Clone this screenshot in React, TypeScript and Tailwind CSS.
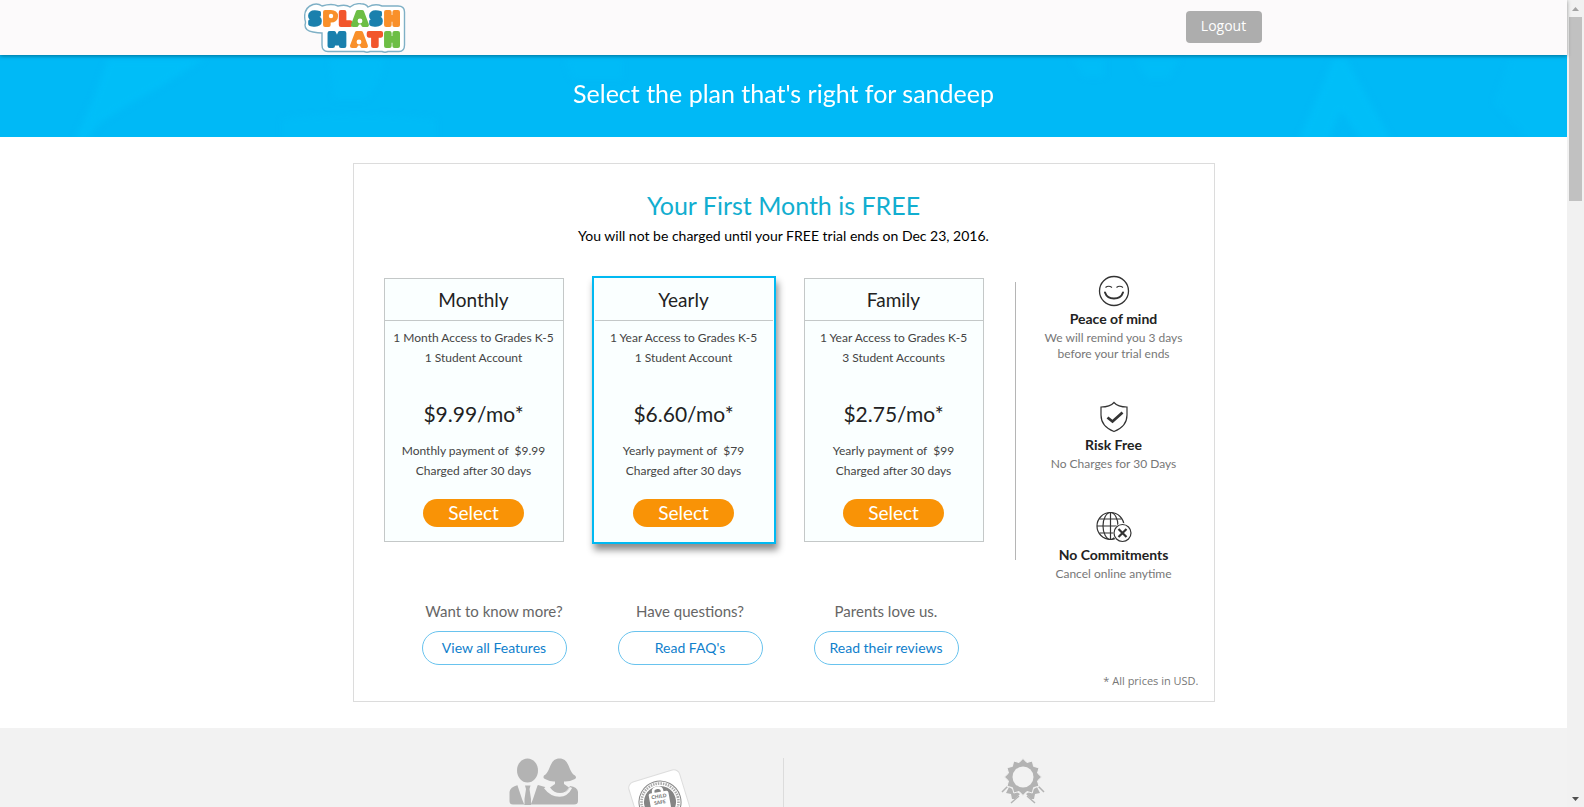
import React from "react";

type Plan = {
  name: string;
  access: string;
  accounts: string;
  price: string;
  payment: string;
  amount: string;
  featured?: boolean;
};

const plans: Plan[] = [
  { name: "Monthly", access: "1 Month Access to Grades K-5", accounts: "1 Student Account", price: "$9.99/mo", payment: "Monthly payment of", amount: "$9.99" },
  { name: "Yearly", access: "1 Year Access to Grades K-5", accounts: "1 Student Account", price: "$6.60/mo", payment: "Yearly payment of", amount: "$79", featured: true },
  { name: "Family", access: "1 Year Access to Grades K-5", accounts: "3 Student Accounts", price: "$2.75/mo", payment: "Yearly payment of", amount: "$99" },
];

const links = [
  { question: "Want to know more?", label: "View all Features" },
  { question: "Have questions?", label: "Read FAQ's" },
  { question: "Parents love us.", label: "Read their reviews" },
];

const BLUE = "#1a80ad";
const ORANGE = "#f9902a";
const RED = "#f2562c";
const GREEN = "#6dbe45";

const letters: [string, number, number, string][] = [
  ["S", 11, 22, BLUE],
  ["P", 26, 22, ORANGE],
  ["L", 41, 22, RED],
  ["A", 56, 22, GREEN],
  ["S", 72, 22, BLUE],
  ["H", 88, 22, ORANGE],
  ["M", 33, 43, BLUE],
  ["A", 55, 43, ORANGE],
  ["T", 71, 43, RED],
  ["H", 88, 43, GREEN],
];

function Logo() {
  return (
    <svg width="102" height="50" viewBox="0 0 102 50" role="img" aria-label="Splash Math">
      <path
        d="M9 1.500 Q14 0 18 3 Q28 0 34 3 Q42 1 46 4 Q51 0 57 0.800 Q62 1 64 4 Q71 0 78 3 H94 Q100.500 3 100.500 9 V42 Q100.500 48.500 95 48.500 H84 Q81 50 78 48.500 H66 Q63 50 60 48.500 H24 Q18 48.500 18 42 V30 Q14 30 9 29 Q1 28 1 22 Q2 19 1 17 Q-1 5 9 1.500 Z"
        fill="#fff"
        stroke="#7fb0c6"
        strokeWidth="1.400"
      />
      <g fontFamily="DejaVu Sans, sans-serif" fontWeight="700" fontSize="18" textAnchor="middle" strokeLinejoin="round">
        {letters.map(([ch, x, y, color], i) => (
          <text key={i} x={x} y={y} fill={color} stroke={color} strokeWidth={ch === "S" ? 3.4 : 4.2}>
            {ch}
          </text>
        ))}
      </g>
      <g fill="#fff">
        <circle cx="27" cy="13" r="2.200" />
        <circle cx="56" cy="18" r="2.400" />
        <circle cx="55" cy="39" r="2.400" />
      </g>
    </svg>
  );
}

function BannerPattern() {
  return (
    <svg className="absolute inset-0 h-full w-full" viewBox="0 0 1567 82" preserveAspectRatio="xMidYMid slice" aria-hidden="true">
      <defs>
        <filter id="soft">
          <feGaussianBlur stdDeviation="3" />
        </filter>
      </defs>
      <g fill="#00bff9" filter="url(#soft)">
        <path d="M108 4 L204 4 L160 32 L125 52 L100 68 L86 86 L74 86 L94 42 Z" opacity="0.800" />
        <path d="M330 4 H384 Q380 30 366 44 H334 Z" opacity="0.400" />
        <path d="M282 64 Q350 54 436 64 V84 H282 Z" opacity="0.400" />
        <path d="M565 4 H622 V24 H572 Z" opacity="0.400" />
        <path d="M1072 4 H1104 V22 H1084 Z M1136 4 H1180 L1168 24 H1146 Z" opacity="0.500" />
        <path d="M1333 4 H1346 L1392 86 H1362 L1341 56 L1328 86 H1298 L1318 40 Z" opacity="0.800" />
        <path d="M1510 4 H1567 V86 H1530 L1494 48 Z" opacity="0.400" />
      </g>
    </svg>
  );
}

function SmileIcon() {
  return (
    <svg width="32" height="32" viewBox="0 0 32 32" fill="none" stroke="#333" aria-hidden="true">
      <circle cx="16" cy="16" r="14.500" strokeWidth="1.300" />
      <path d="M7.500 12.500 Q10.500 10 14 12.500 M18.500 12.500 Q21.500 10 25 12.500" strokeWidth="1.200" />
      <path d="M7 17.500 Q9 23.500 16 23.500 Q23 23.500 25 17.500" strokeWidth="2" strokeLinecap="round" />
    </svg>
  );
}

function ShieldIcon() {
  return (
    <svg width="32" height="32" viewBox="0 0 32 32" fill="none" stroke="#333" aria-hidden="true">
      <path d="M16 1.500 Q12 6 3 6 V14 Q3 25.500 16 30.500 Q29 25.500 29 14 V6 Q20 6 16 1.500 Z" strokeWidth="1.200" />
      <path d="M9.500 16.500 L14.500 20.500 L24.500 11.500" strokeWidth="2.800" />
    </svg>
  );
}

function GlobeIcon() {
  return (
    <svg width="36" height="32" viewBox="0 0 36 32" fill="none" stroke="#333" strokeWidth="1.200" aria-hidden="true">
      <circle cx="14.500" cy="15" r="13.500" />
      <ellipse cx="14.500" cy="15" rx="7.500" ry="13.500" />
      <path d="M14.500 1.500 V28.500 M1 15 H28 M3.500 8 H25.500 M3.500 22 H25.500" />
      <circle cx="27" cy="22" r="10" fill="#fff" stroke="none" />
      <circle cx="26.500" cy="22" r="8.500" fill="#fff" />
      <path d="M22.500 18 L30.500 26 M30.500 18 L22.500 26" strokeWidth="2.200" />
    </svg>
  );
}

const benefits = [
  { icon: <SmileIcon />, title: "Peace of mind", lines: ["We will remind you 3 days", "before your trial ends"], gap: "h-[126px]" },
  { icon: <ShieldIcon />, title: "Risk Free", lines: ["No Charges for 30 Days"], gap: "h-[110px]" },
  { icon: <GlobeIcon />, title: "No Commitments", lines: ["Cancel online anytime"], gap: "" },
];

function PlanCard({ plan }: { plan: Plan }) {
  return (
    <article
      className={
        "flex flex-col items-center bg-[#faffff] text-center text-[#444] " +
        (plan.featured
          ? "w-[184px] border-2 border-[#00b9f2] px-px py-px shadow-[2px_6px_7px_rgba(0,0,0,0.45)]"
          : "my-[2px] w-[180px] border border-[#c4c8c8]")
      }
    >
      <h2 className="h-[42px] w-full border-b border-[#c4c8c8] text-[19px] leading-[42px] text-[#222]">{plan.name}</h2>
      <p className="mt-[7px] text-xs leading-5">
        {plan.access}
        <br />
        {plan.accounts}
      </p>
      <p className="mt-[31px] text-[21px] leading-[30px] text-[#222]">{plan.price}*</p>
      <p className="mt-3 text-xs leading-5">
        {plan.payment}&nbsp; {plan.amount}
        <br />
        Charged after 30 days
      </p>
      <button type="button" className="mt-[18px] mb-[14px] h-7 w-[101px] rounded-full bg-[#f99306] text-[19px] leading-7 text-white">
        Select
      </button>
    </article>
  );
}

function ParentsIcon() {
  return (
    <svg width="70" height="48" viewBox="0 0 70 48" fill="#b3b3b3" aria-hidden="true">
      <ellipse cx="18.500" cy="12.500" rx="10.500" ry="12" />
      <path d="M9 27 Q1 29 0.500 34 V43 Q0.500 46.500 4 46.500 H65 Q69 46.500 69 43 V34 Q68.500 29 61 28 Q57 37 50 37.500 Q41 37 36 29 L29 27 Q25 30 18.500 30 Q12 30 9 27 Z" />
      <path d="M50.500 0.500 C40 0.500 42 14 35 17.500 Q33.500 20 36 21 Q42 24 46 23.500 V26 L41 29.500 Q45 35 51 35 Q57 35 60 29.500 L55 26 V23.500 Q60 24 66 21 Q68 19.500 66 17.500 C59 14 61 0.500 50.500 0.500 Z" />
      <path d="M8 26 H29 L24 41 L22 46 H15 L13 41 Z" fill="#f2f2f2" />
      <path d="M16 27.500 H21.500 L20.500 31 L22 41 V47 H15.500 V41 L17 31 Z" />
      <path d="M36 29.500 Q42 37.500 50.500 37.500 Q58 37.500 62 29.500" fill="none" stroke="#f2f2f2" strokeWidth="2.500" />
    </svg>
  );
}

function SealIcon() {
  return (
    <svg width="72" height="72" viewBox="0 0 72 72" role="img" aria-label="Child Safe">
      <g transform="rotate(-17 36 36)">
        <rect x="10" y="9" width="53" height="54" rx="6" fill="#fff" stroke="#ddd" />
        <circle cx="36" cy="36" r="21" fill="#fff" stroke="#888" strokeWidth="1" />
        <circle cx="36" cy="36" r="18.500" fill="none" stroke="#aaa" strokeWidth="2.600" strokeDasharray="1.500 1" />
        <circle cx="36" cy="36" r="16" fill="#858585" />
      </g>
      <g transform="rotate(-10 36 36)">
        <path d="M31 27 V25 Q31 21.500 35.500 21.500 Q40 21.500 40 25 V27" fill="none" stroke="#fff" strokeWidth="2.600" />
        <rect x="26" y="26" width="20" height="18" rx="2" fill="#fff" />
        <g fill="#777" fontFamily="Lato, sans-serif" fontWeight="900" fontSize="5" textAnchor="middle">
          <text x="36" y="32">CHILD</text>
          <text x="36" y="38">SAFE</text>
        </g>
      </g>
    </svg>
  );
}

function RibbonIcon() {
  const points = Array.from({ length: 24 }, (_, i) => {
    const r = i % 2 ? 15 : 18.5;
    const a = (i * Math.PI) / 12 - Math.PI / 2;
    return `${(22 + r * Math.cos(a)).toFixed(1)},${(19 + r * Math.sin(a)).toFixed(1)}`;
  }).join(" ");
  return (
    <svg width="44" height="48" viewBox="0 0 44 48" fill="#b3b3b3" aria-hidden="true">
      <path d="M8 29 L19 36 L14 41 L11 41 L10 36 L5 35 Z M36 29 L25 36 L30 41 L33 41 L34 36 L39 35 Z" />
      <path d="M7 28 L1 34 M18 38 L10 45 M37 28 L43 34 M26 38 L34 45" stroke="#b3b3b3" strokeWidth="1.500" />
      <polygon points={points} stroke="#f2f2f2" strokeWidth="1" />
      <circle cx="22" cy="19" r="10.500" fill="#f2f2f2" />
    </svg>
  );
}

export default function App() {
  return (
    <div className="flex h-screen overflow-hidden bg-white font-['Lato',sans-serif] text-black">
      <div className="flex min-w-0 flex-1 flex-col">
        <header className="relative z-10 shrink-0 bg-[#fcfafb] shadow-[0_1px_4px_rgba(0,0,0,0.4)]">
          <div className="mx-auto flex h-[55px] max-w-[960px] items-start justify-between pr-[2px]">
            <a href="#home" className="mt-[3px]">
              <Logo />
            </a>
            <button type="button" className="mt-[11px] h-8 w-[76px] rounded bg-[#adadad] pb-[3px] font-['Open_Sans',sans-serif] text-sm text-white">
              Logout
            </button>
          </div>
        </header>

        <div className="relative h-[82px] shrink-0 bg-[#00b9f6]">
          <BannerPattern />
          <h1 className="relative pt-[22px] text-center text-[25px] leading-8 text-white">Select the plan that's right for sandeep</h1>
        </div>

        <main className="mx-auto mt-[26px] w-full max-w-[862px] shrink-0 border border-[#dcdcdc] px-[30px] pb-3">
          <h2 className="mt-[25px] text-center text-[25px] leading-8 text-[#12aed0]">Your First Month is FREE</h2>
          <p className="mt-[5px] text-center text-sm leading-5">You will not be charged until your FREE trial ends on Dec 23, 2016.</p>

          <div className="mt-[30px] flex items-start">
            <div className="flex gap-7">
              {plans.map((p) => (
                <PlanCard key={p.name} plan={p} />
              ))}
            </div>
            <div className="-mr-7 mt-[6px] ml-[31px] flex h-[278px] flex-1 flex-col border-l border-[#b5b5b5]">
              {benefits.map((b) => (
                <section key={b.title} className={"-mt-[7px] mb-[7px] flex shrink-0 flex-col items-center text-center " + b.gap}>
                  {b.icon}
                  <h3 className="mt-[2px] text-sm leading-5 font-bold text-[#222]">{b.title}</h3>
                  <p className="mt-px text-xs leading-4 text-[#777]">
                    {b.lines.map((l) => (
                      <span key={l} className="block">
                        {l}
                      </span>
                    ))}
                  </p>
                </section>
              ))}
            </div>
          </div>

          <div className="mt-[41px] flex gap-[51px] pl-[38px]">
            {links.map((l) => (
              <div key={l.label} className="flex w-[145px] flex-col items-center">
                <p className="text-[15px] leading-5 whitespace-nowrap text-[#666]">{l.question}</p>
                <a href="#more" className="mt-[10px] w-full rounded-full border border-[#69c3ee] pb-px text-center text-sm leading-[31px] text-[#0f80cc]">
                  {l.label}
                </a>
              </div>
            ))}
          </div>
          <p className="-mr-[15px] mt-2 text-right font-['Open_Sans',sans-serif] text-[11px] leading-4 text-[#777]">* All prices in USD.</p>
        </main>

        <footer className="mt-[26px] min-h-0 flex-1 bg-[#f2f2f2] pt-[30px]">
          <div className="mx-auto grid h-40 max-w-[958px] grid-cols-2">
            <div className="relative flex justify-center border-r border-[#dcdcdc]">
              <ParentsIcon />
              <div className="absolute top-2 left-1/2 ml-[80px]">
                <SealIcon />
              </div>
            </div>
            <div className="flex justify-center">
              <RibbonIcon />
            </div>
          </div>
        </footer>
      </div>

      <div className="flex w-[17px] shrink-0 flex-col items-center justify-between bg-[#f1f1f1]" aria-hidden="true">
        <div className="flex w-full flex-col items-center">
          <svg width="17" height="17" viewBox="0 0 17 17" fill="#a3a3a3">
            <path d="M5 11 L8.500 7 L12 11 Z" />
          </svg>
          <div className="h-[184px] w-[13px] bg-[#c1c1c1]" />
        </div>
        <svg width="17" height="17" viewBox="0 0 17 17" fill="#505050">
          <path d="M5 7 L8.500 11 L12 7 Z" />
        </svg>
      </div>
    </div>
  );
}
